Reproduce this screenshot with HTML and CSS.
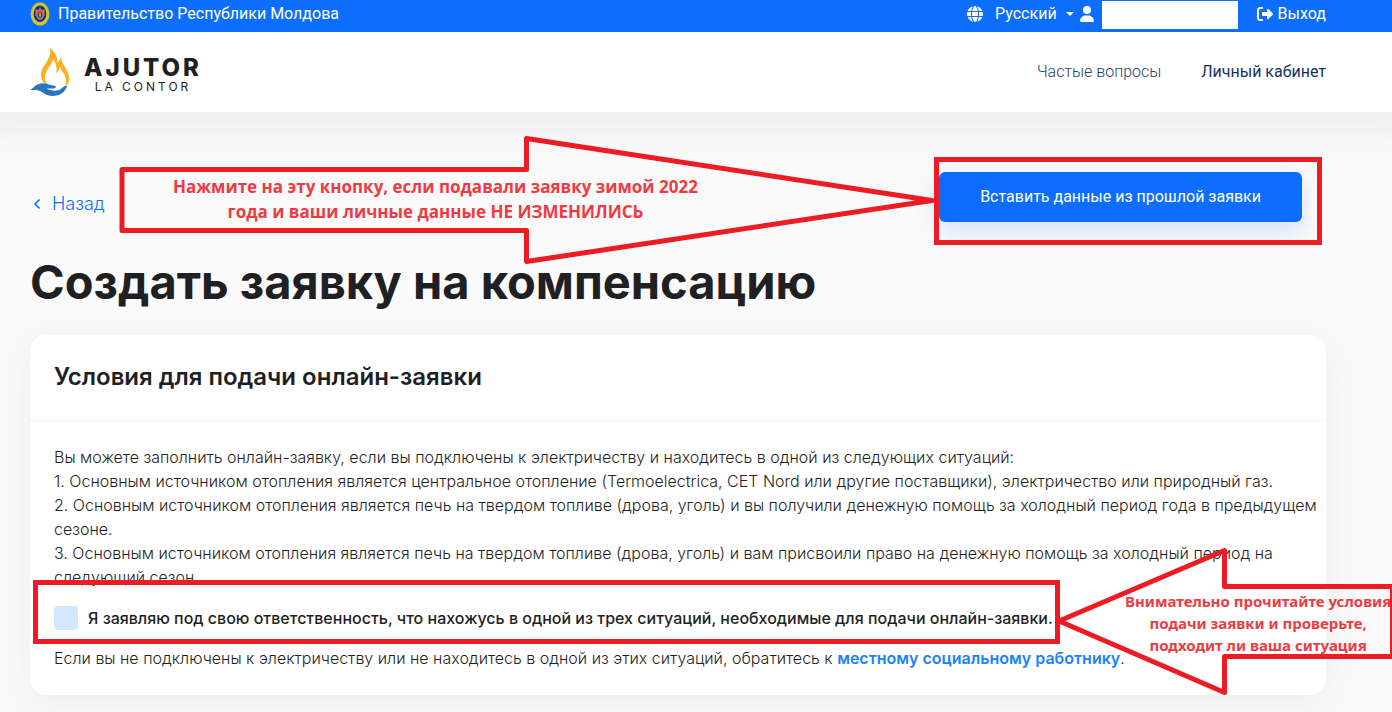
FILE: index.html
```html
<!DOCTYPE html>
<html lang="ru">
<head>
<meta charset="utf-8">
<meta name="viewport" content="width=device-width, initial-scale=1">
<title>Ajutor la contor</title>
<link rel="stylesheet" href="styles.css">
</head>
<body>
<header class="site-header">
  <div class="topbar">
    <a class="gov" href="#">
      <svg class="emblem" width="20" height="24" viewBox="0 0 20 24" aria-hidden="true">
        <ellipse cx="10" cy="12" rx="9.4" ry="11.6" fill="#d9cf1c"/>
        <ellipse cx="10" cy="12" rx="8.2" ry="10.2" fill="none" stroke="#a99a2c" stroke-width="1" stroke-dasharray="1 2"/>
        <ellipse cx="10" cy="11.8" rx="6.4" ry="8.4" fill="#1c2a9c"/>
        <path d="M10 5l1 2.500 1.200.5 2.300-1v7l-1.500 1-.5 2-2.500 1-2.500-1-.5-2-1.500-1V7l2.300 1L9 7.500z" fill="#b08a3a"/>
        <path d="M7.500 9h5v3h-5z" fill="#e03a2a"/>
        <path d="M7.500 12h5v2L10 16.500 7.500 14z" fill="#2b3fb5"/>
        <path d="M9.300 12h1.400v2.500H9.300z" fill="#e8cf2a"/>
      </svg>
      <span>Правительство Республики Молдова</span>
    </a>
    <div class="tools">
      <button class="lang" type="button">
        <svg width="16" height="16" viewBox="0 0 512 512" fill="currentColor" aria-hidden="true"><path d="M352 256c0 22.200-1.200 43.600-3.300 64H163.300c-2.200-20.400-3.300-41.800-3.300-64s1.200-43.600 3.300-64H348.700c2.200 20.400 3.300 41.800 3.300 64zm28.800-64H503.900c5.300 20.500 8.100 41.900 8.100 64s-2.800 43.500-8.100 64H380.800c2.100-20.600 3.200-42 3.200-64s-1.100-43.400-3.200-64zm112.600-32H376.700c-10-63.900-29.800-117.400-55.300-151.600c78.300 20.700 142 77.500 171.900 151.600zm-149.100 0H167.700c6.100-36.400 15.500-68.600 27-94.700c10.500-23.600 22.200-40.700 33.500-51.500C239.400 3.200 248.700 0 256 0s16.600 3.200 27.800 13.800c11.300 10.800 23 27.900 33.500 51.500c11.600 26 20.900 58.200 27 94.700zm-209 0H18.600C48.600 85.900 112.200 29.100 190.600 8.400C165.100 42.600 145.300 96.100 135.300 160zM8.100 192H131.200c-2.100 20.600-3.200 42-3.200 64s1.100 43.400 3.200 64H8.100C2.800 299.500 0 278.100 0 256s2.800-43.500 8.100-64zM194.700 446.600c-11.600-26-20.900-58.200-27-94.600H344.300c-6.100 36.400-15.500 68.600-27 94.600c-10.500 23.600-22.200 40.700-33.500 51.500C272.600 508.800 263.300 512 256 512s-16.600-3.200-27.800-13.800c-11.300-10.800-23-27.900-33.500-51.500zM135.300 352c10 63.900 29.800 117.400 55.300 151.600C112.200 482.900 48.600 426.100 18.600 352H135.300zm358.100 0c-30 74.100-93.600 130.900-171.900 151.600c25.500-34.200 45.200-87.700 55.300-151.600H493.400z"/></svg>
        <span>Русский</span>
        <i class="caret"></i>
      </button>
      <svg class="user" width="14" height="16" viewBox="0 0 448 512" fill="currentColor" aria-hidden="true"><path d="M224 256A128 128 0 1 0 224 0a128 128 0 1 0 0 256zm-45.700 48C79.800 304 0 383.800 0 482.300C0 498.700 13.300 512 29.700 512H418.300c16.400 0 29.700-13.300 29.700-29.700C448 383.800 368.200 304 269.700 304H178.300z"/></svg>
      <span class="user-name"></span>
      <a class="logout" href="#">
        <svg width="16" height="16" viewBox="0 0 512 512" fill="currentColor" aria-hidden="true"><path d="M377.900 105.900L500.700 228.700c7.200 7.200 11.300 17.100 11.300 27.300s-4.100 20.100-11.300 27.300L377.900 406.100c-6.400 6.400-15 9.900-24 9.900c-18.700 0-33.900-15.200-33.900-33.900l0-62.100-128 0c-17.700 0-32-14.300-32-32l0-64c0-17.700 14.300-32 32-32l128 0 0-62.100c0-18.700 15.200-33.900 33.900-33.900c9 0 17.600 3.600 24 9.900zM160 96L96 96c-17.700 0-32 14.300-32 32l0 256c0 17.700 14.300 32 32 32l64 0c17.700 0 32 14.300 32 32s-14.300 32-32 32l-64 0c-53 0-96-43-96-96L0 128C0 75 43 32 96 32l64 0c17.700 0 32 14.300 32 32s-14.300 32-32 32z"/></svg>
        <span>Выход</span>
      </a>
    </div>
  </div>
  <div class="navbar">
    <a class="brand" href="#">
      <svg width="44" height="52" viewBox="0 2 44 52" aria-hidden="true">
        <path d="M22 3.500C30 11 29 15 29.500 18.500C31 17 32.500 15 33 12.500C33.500 21 41 26 41.300 34.500C41.400 38 40 41.500 36.500 43C38.500 39 38.500 34 36 30C34 27 32.500 25.500 32 22C31.500 25 30 27.500 28.500 29.500C29 24 28 18.500 25 15.500C24 21 17.500 26 17 32C16.800 35 17.500 37.500 19 39.500L15.500 39C10 29 15 23 18.500 18C21.500 13.500 23 9 22 3.500z" fill="#fbb02a"/>
        <path d="M2 45.800C6 44.500 7 40 14 39.300C19 39 22 41.500 27 41.800C28.500 42.200 28 44.300 26 44.500L18.500 44.600C24 47.500 31 47.500 34.500 43.500C36 42 38 41.500 39 42.500C37 48 32 52 24.500 52C17 52 16 48 10.500 46.500C7 45.700 4 46.500 2 45.800z" fill="#2a75bd"/>
      </svg>
      <span class="brand-text">
        <span class="brand-name">AJUTOR</span>
        <span class="brand-sub">LA CONTOR</span>
      </span>
    </a>
    <nav class="menu">
      <a class="menu-link" href="#">Частые вопросы</a>
      <a class="menu-link menu-link-strong" href="#">Личный кабинет</a>
    </nav>
  </div>
</header>

<main class="page">
  <div class="actions">
    <a class="back" href="#">
      <svg width="8" height="12" viewBox="0 0 8 12" fill="none" stroke="currentColor" stroke-width="1.600" aria-hidden="true"><path d="M6.500 1.500L2 6l4.500 4.500"/></svg>
      <span>Назад</span>
    </a>
    <button class="primary" type="button">Вставить данные из прошлой заявки</button>
  </div>
  <h1 class="title">Создать заявку на компенсацию</h1>
  <section class="card">
    <h2 class="card-title">Условия для подачи онлайн-заявки</h2>
    <div class="card-body">
      <p class="text">Вы можете заполнить онлайн-заявку, если вы подключены к электричеству и находитесь в одной из следующих ситуаций:<br>
      1. Основным источником отопления является центральное отопление (Termoelectrica, CET Nord или другие поставщики), электричество или природный газ.<br>
      2. Основным источником отопления является печь на твердом топливе (дрова, уголь) и вы получили денежную помощь за холодный период года в предыдущем сезоне.<br>
      3. Основным источником отопления является печь на твердом топливе (дрова, уголь) и вам присвоили право на денежную помощь за холодный период на следующий сезон.</p>
      <label class="agree" for="agree"><input id="agree" class="agree-box" type="checkbox"><span>Я заявляю под свою ответственность, что нахожусь в одной из трех ситуаций, необходимые для подачи онлайн-заявки.</span></label>
      <p class="text">Если вы не подключены к электричеству или не находитесь в одной из этих ситуаций, обратитесь к <a class="text-link" href="#">местному социальному работнику</a>.</p>
    </div>
  </section>
</main>

<div class="notes">
  <svg class="notes-shapes" width="1392" height="712" viewBox="0 0 1392 712" fill="none" stroke="#ed1c24" stroke-width="5" stroke-linejoin="round" aria-hidden="true">
    <path d="M122 169.500H526.500V138.500L932 200.500L526.500 261.500V230.500H122z"/>
    <path d="M936.500 159.500H1319.500V242.500H936.500z" stroke-linejoin="miter"/>
    <path d="M35.500 582.500H1057.500V641.500H35.500z" stroke-linejoin="miter"/>
    <path d="M1059 621L1224.500 550.500V586.500H1392.500V656.500H1224.500V692.500z"/>
  </svg>
  <p class="note note-insert">Нажмите на эту кнопку, если подавали заявку зимой 2022<br>года и ваши личные данные НЕ ИЗМЕНИЛИСЬ</p>
  <p class="note note-terms">Внимательно прочитайте условия<br>подачи заявки и проверьте,<br>подходит ли ваша ситуация</p>
</div>
</body>
</html>
```
FILE: styles.css
```css
* { box-sizing: border-box; }
html { overflow: hidden; }
body {
  margin: 0;
  position: relative;
  min-height: 100vh;
  background: #fafafa;
  color: #1f1f24;
  font: 400 16px/24px Inter, sans-serif;
}
a { color: inherit; text-decoration: none; }
svg { display: block; flex: none; }
h1, h2, p { margin: 0; }
button { border: 0; font: inherit; cursor: pointer; }

.site-header { font-family: Roboto, sans-serif; box-shadow: 0 -12px 40px 32px rgba(0, 0, 0, .05); }
.topbar {
  display: flex;
  justify-content: space-between;
  align-items: center;
  height: 32px;
  padding: 0 66px 4px 30px;
  background: #0d6efd;
  color: #fff;
}
.gov, .tools, .lang, .logout { display: flex; align-items: center; }
.gov { gap: 8px; }
.lang { gap: 12px; padding: 0; background: none; color: #fff; }
.caret {
  margin-left: -3px;
  border: 4px solid transparent;
  border-top-color: #fff;
  border-bottom: 0;
}
.user { margin-left: 6px; }
.user-name { width: 136px; height: 28px; margin: 2px 19px 0 8px; background: #fff; }
.logout { gap: 5px; }
.navbar {
  display: flex;
  justify-content: space-between;
  align-items: center;
  height: 80px;
  padding: 0 66px 0 28px;
  background: #fff;
}
.brand { display: flex; align-items: center; gap: 12px; color: #231f20; font-family: Inter, sans-serif; }
.brand-text { display: flex; flex-direction: column; align-items: center; padding-top: 6px; }
.brand-name { font-size: 24px; font-weight: 800; line-height: 24px; letter-spacing: 3px; }
.brand-sub { font-size: 12px; line-height: 14px; letter-spacing: 3px; }
.menu { display: flex; gap: 40px; color: #28406e; }
.menu-link { font-weight: 300; }
.menu-link-strong { font-weight: 400; color: #16325f; }

.page { padding: 60px 66px 17px 30px; }
.actions { display: flex; justify-content: space-between; align-items: center; padding-right: 24px; }
.back { display: flex; align-items: center; gap: 11px; padding: 14px 0 0 3px; color: #0d6efd; font-size: 18px; font-weight: 300; }
.primary {
  height: 50px;
  padding: 0 41px;
  border-radius: 6px;
  background: #0d6efd;
  color: #fff;
  font-family: Roboto, sans-serif;
  box-shadow: 0 8px 24px rgba(13, 110, 253, .18);
}
.title { margin: 32px 0 25px; font-size: 47px; font-weight: 700; line-height: 56px; }
.card { border-radius: 16px; background: #fff; box-shadow: 0 8px 40px rgba(0, 0, 0, .06); }
.card-title { padding: 26px 24px; border-bottom: 3px solid #fafafa; font-size: 24px; font-weight: 600; line-height: 32px; }
.card-body { padding: 23px 4px 25px 24px; }
.text { font-weight: 300; }
.text-link { color: #1a82ff; font-weight: 600; }
.agree { display: flex; align-items: center; gap: 10px; margin: 17px 0 16px; font-weight: 550; }
.agree-box { appearance: none; width: 24px; height: 24px; margin: 0; border-radius: 4px; background: #d3e8ff; }

.notes { position: absolute; inset: 0; overflow: hidden; pointer-events: none; }
.notes-shapes { position: absolute; top: 0; left: 0; }
.note { position: absolute; color: #f03a42; font-weight: 700; text-align: center; white-space: nowrap; }
.note-insert { top: 174px; left: 173px; font-family: "Open Sans", sans-serif; font-size: 17px; line-height: 25px; }
.note-terms { top: 590px; left: 1125px; font-family: "Noto Sans", sans-serif; font-size: 15px; line-height: 22px; }
```
